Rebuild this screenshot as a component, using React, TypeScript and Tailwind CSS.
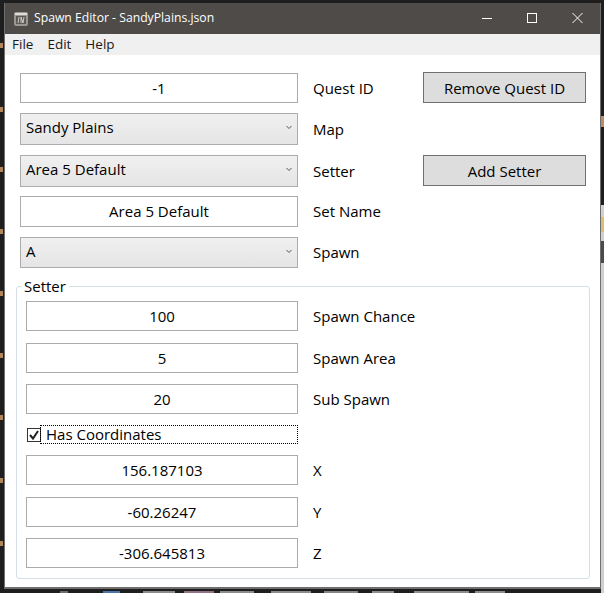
import type { ReactNode } from 'react'

const font = { fontFamily: '"Open Sans", "Liberation Sans", sans-serif' }

// bits of the editor window behind this one
const specks = [43, 107, 167, 229, 291, 353, 415, 478, 541]
const bottomBits = [
  { w: 8, gap: 60, color: 'bg-[#6e6e6e]' },
  { w: 17, gap: 35, color: 'bg-[#4a76a3]' },
  { w: 32, gap: 23, color: 'bg-[#8c8c8c]' },
  { w: 30, gap: 9, color: 'bg-[#8f7284]' },
  { w: 34, gap: 6, color: 'bg-[#8c8c8c]' },
  { w: 40, gap: 17, color: 'bg-[#8c8c8c]' },
  { w: 34, gap: 13, color: 'bg-[#858585]' },
  { w: 22, gap: 14, color: 'bg-[#8c8c8c]' },
  { w: 55, gap: 20, color: 'bg-[#8c8c8c]' },
  { w: 30, gap: 6, color: 'bg-[#8c8c8c]' },
]

function Field({ value }: { value: string }) {
  return (
    <div className="flex h-full w-full items-center justify-center border border-[#ababab] bg-white text-black">
      {value}
    </div>
  )
}

function Select({ value }: { value: string }) {
  return (
    <div className="flex h-full w-full items-center justify-between border border-[#acacac] bg-gradient-to-b from-[#f0f0f0] to-[#e5e5e5] pb-[3px] pl-[5px] pr-[4px] text-black">
      <span>{value}</span>
      <svg width="6" height="5" viewBox="0 0 6 5" className="mr-[1px]">
        <path d="M0.5 1 L3 3.5 L5.5 1" fill="none" stroke="#555" strokeWidth="1" />
      </svg>
    </div>
  )
}

function Button({ label, className }: { label: string; className: string }) {
  return (
    <button className={`flex h-[31px] w-[163px] items-center justify-center border border-[#707070] bg-[#dddddd] pt-[1px] text-black ${className}`}>
      {label}
    </button>
  )
}

function Row({ left, label, right, width, height, gap }: {
  left: ReactNode
  label: string
  right?: ReactNode
  width: string
  height: string
  gap: string
}) {
  return (
    <div className={`flex items-center ${height} ${gap}`}>
      <div className={`h-full shrink-0 ${width}`}>{left}</div>
      <div className="ml-[15px] w-[110px] shrink-0 text-black">{label}</div>
      {right}
    </div>
  )
}

export default function App() {
  return (
    <div className="relative h-[593px] w-[604px] overflow-hidden bg-[#1e1e1e] pl-[4px] pt-[3px] text-[15px] leading-none" style={font}>
      {specks.map((y) => (
        <div key={y} className="absolute left-0 h-[5px] w-[3px] bg-[#b5855a]" style={{ top: y }} />
      ))}
      <div className="absolute right-0 top-0 flex h-full w-[3px] flex-col">
        <div className="h-[116px] bg-[#1e1e1e]" />
        <div className="h-[11px] bg-[#b98d6a]" />
        <div className="h-[78px] bg-[#1e1e1e]" />
        <div className="h-[12px] bg-[#d0d0d0]" />
        <div className="h-[15px] bg-[#dcc070]" />
        <div className="h-[9px] bg-[#d0d0d0]" />
        <div className="h-[22px] bg-[#4a4a4a]" />
        <div className="flex-1 bg-[#cfcfcf]" />
      </div>
      <div className="absolute bottom-0 left-0 flex h-[2px]">
        {bottomBits.map((bit, i) => (
          <div key={i} className={bit.color} style={{ width: bit.w, marginLeft: bit.gap }} />
        ))}
      </div>

      <div className="relative flex h-[586px] w-[597px] flex-col border-x border-b-2 border-[#6f6f6f] bg-white">
        {/* title bar */}
        <div className="flex h-[31px] shrink-0 items-center bg-[#4e4b49] text-[12.2px] text-white">
          <svg width="14" height="14" viewBox="0 0 14 14" className="ml-[9px] mr-[6px]">
            <rect x="0" y="0" width="14" height="14" rx="2" fill="#9a9692" />
            <rect x="1" y="1" width="12" height="2" fill="#dedcd9" />
            <rect x="2" y="4" width="10" height="8" fill="#5c5855" />
            <path d="M4 11 L5 5 M7 11 L7 5 L9 11 L10 5" stroke="#cfccc8" strokeWidth="1" fill="none" />
          </svg>
          <span>Spawn Editor - SandyPlains.json</span>
          <div className="ml-auto flex items-center">
            <svg width="45" height="31" viewBox="0 0 45 31">
              <path d="M17 15.5 H27" stroke="#fff" strokeWidth="1" />
            </svg>
            <svg width="45" height="31" viewBox="0 0 45 31">
              <rect x="17.5" y="10.5" width="9" height="9" fill="none" stroke="#fff" strokeWidth="1" />
            </svg>
            <svg width="45" height="31" viewBox="0 0 45 31">
              <path d="M17.5 10 L27.5 20 M27.5 10 L17.5 20" stroke="#fff" strokeWidth="1" />
            </svg>
          </div>
        </div>

        {/* menu */}
        <div className="flex h-[21px] shrink-0 items-center gap-[14px] bg-[#f0f0f0] pl-[7px] pt-[1px] text-[13.5px] text-[#1a1a1a]">
          <span>File</span>
          <span>Edit</span>
          <span>Help</span>
        </div>

        <div className="flex flex-1 flex-col pl-[15px] pr-[11px] pt-[18px]">
          <Row width="w-[278px]" height="h-[30px]" gap="mb-[10px]" left={<Field value="-1" />} label="Quest ID" right={<Button label="Remove Quest ID" className="-mt-[1px] self-start" />} />
          <Row width="w-[278px]" height="h-[32px]" gap="mb-[10px]" left={<Select value="Sandy Plains" />} label="Map" />
          <Row width="w-[278px]" height="h-[32px]" gap="mb-[9px]" left={<Select value="Area 5 Default" />} label="Setter" right={<Button label="Add Setter" className="self-start" />} />
          <Row width="w-[278px]" height="h-[31px]" gap="mb-[10px]" left={<Field value="Area 5 Default" />} label="Set Name" />
          <Row width="w-[278px]" height="h-[31px]" gap="mb-[9px]" left={<Select value="A" />} label="Spawn" />

          <fieldset className="-ml-[4px] w-[574px] rounded-[3px] border border-[#d5dfe5] pb-[10px] pl-[9px]">
            <legend className="-ml-[5px] px-[3px] text-[15px] leading-[18px] text-black">Setter</legend>
            <div className="pt-[6px]">
              <Row width="w-[272px]" height="h-[30px]" gap="mb-[12px]" left={<Field value="100" />} label="Spawn Chance" />
              <Row width="w-[272px]" height="h-[30px]" gap="mb-[11px]" left={<Field value="5" />} label="Spawn Area" />
              <Row width="w-[272px]" height="h-[30px]" gap="mb-[11px]" left={<Field value="20" />} label="Sub Spawn" />
              <div className="mb-[11px] flex h-[19px] w-[272px] items-center">
                <svg width="14" height="14" viewBox="0 0 14 14" className="ml-[1px] shrink-0">
                  <rect x="0.5" y="0.5" width="13" height="13" fill="#fff" stroke="#333" />
                  <path d="M3 7 L6 10.5 L11 3" fill="none" stroke="#222" strokeWidth="2" />
                </svg>
                <div className="-ml-[1px] flex h-full flex-1 items-center border border-dotted border-black pl-[5px] text-black">
                  Has Coordinates
                </div>
              </div>
              <Row width="w-[272px]" height="h-[30px]" gap="mb-[12px]" left={<Field value="156.187103" />} label="X" />
              <Row width="w-[272px]" height="h-[30px]" gap="mb-[11px]" left={<Field value="-60.26247" />} label="Y" />
              <Row width="w-[272px]" height="h-[30px]" gap="" left={<Field value="-306.645813" />} label="Z" />
            </div>
          </fieldset>
        </div>
      </div>
    </div>
  )
}
